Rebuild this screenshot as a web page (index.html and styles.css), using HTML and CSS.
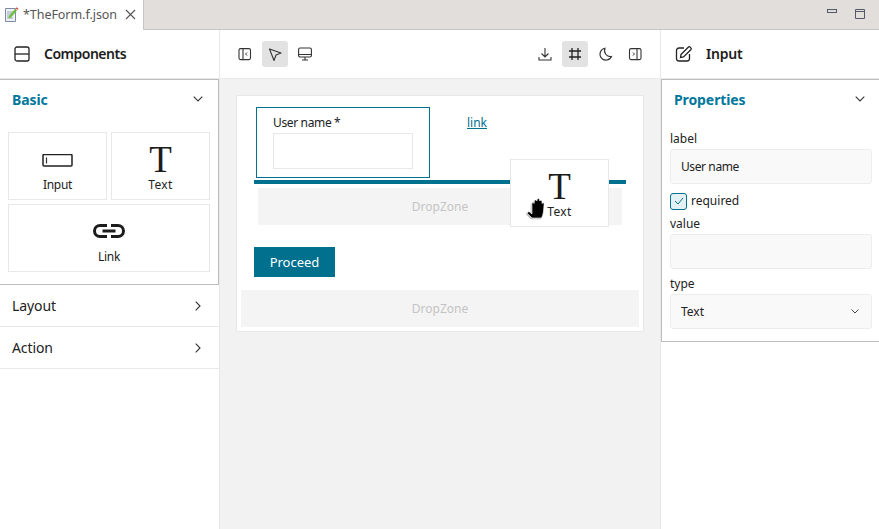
FILE: index.html
```html
<!DOCTYPE html>
<html lang="en">
<head>
<meta charset="utf-8">
<title>TheForm</title>
<link rel="stylesheet" href="styles.css">
</head>
<body>
<div class="app">
  <div class="tabbar">
    <div class="tab">
      <svg class="tab-icon" width="14" height="15" viewBox="0 0 14 15"><path d="M.5 1.500h10v13H.5z" fill="#eef1f6" stroke="#7c8aa5"/><path d="M2 5h6M2 7h5M2 9h4M2 11h6" stroke="#9aa6bb"/><path d="M4 9l6-7 2 1.600-6 7-2.500.8z" fill="#6fbf3f"/><path d="M10.500 1.500l1-1.300 2 1.600-1 1.300z" fill="#d9503f"/></svg>
      <span class="tab-title">*TheForm.f.json</span>
      <svg class="tab-close" width="11" height="11" viewBox="0 0 11 11"><path d="M1 1l9 9M10 1l-9 9" stroke="#555" stroke-width="1.100" fill="none"/></svg>
    </div>
    <div class="winctl">
      <svg width="10" height="4" viewBox="0 0 10 4"><rect x=".5" y=".5" width="9" height="3" fill="none" stroke="#555a66"/></svg>
      <svg width="10" height="10" viewBox="0 0 10 10"><path d="M.5.500h9v9h-9zM.5 2.500h9" fill="none" stroke="#555a66"/></svg>
    </div>
  </div>
  <div class="main">
    <aside class="left">
      <header class="head">
        <svg class="head-icon" width="16" height="16" viewBox="0 0 16 16"><rect x="1" y="1" width="14" height="14" rx="2" fill="none" stroke="#222" stroke-width="1.300"/><path d="M1 8h14" stroke="#222" stroke-width="1.300"/></svg>
        <span class="head-title">Components</span>
      </header>
      <section class="panel-open">
        <div class="acc-head accent">Basic
          <svg class="chev" width="10" height="6" viewBox="0 0 10 6"><path d="M.7.700L5 5 9.300.7" fill="none" stroke="#333" stroke-width="1.100"/></svg>
        </div>
        <div class="palette">
          <div class="pal-item">
            <svg class="pal-icon" width="32" height="14" viewBox="0 0 32 14"><rect x="1" y=".5" width="29" height="11.500" rx="1" fill="none" stroke="#222" stroke-width="1.500"/><path d="M4.500 3.500v6" stroke="#333" stroke-width="1.200"/></svg>
            <span>Input</span>
          </div>
          <div class="pal-item">
            <span class="big-t">T</span>
            <span class="t-lbl">Text</span>
          </div>
          <div class="pal-item wide">
            <svg class="pal-icon link-icon" width="32" height="16" viewBox="0 0 32 16"><path d="M14 2.500H7a5.500 5.500 0 0 0 0 11h7M18 2.500h7a5.500 5.500 0 0 1 0 11h-7" fill="none" stroke="#1c1c1c" stroke-width="3"/><path d="M9.500 8h13" stroke="#1c1c1c" stroke-width="3"/></svg>
            <span>Link</span>
          </div>
        </div>
      </section>
      <div class="acc-row">Layout
        <svg width="6" height="10" viewBox="0 0 6 10"><path d="M.7.700L5 5 .7 9.300" fill="none" stroke="#333" stroke-width="1.100"/></svg>
      </div>
      <div class="acc-row">Action
        <svg width="6" height="10" viewBox="0 0 6 10"><path d="M.7.700L5 5 .7 9.300" fill="none" stroke="#333" stroke-width="1.100"/></svg>
      </div>
    </aside>
    <main class="center">
      <div class="toolbar">
        <div class="tools">
          <button class="tool"><svg width="14" height="14" viewBox="0 0 14 14"><rect x="1" y="1.600" width="11.500" height="11" rx="1.500" fill="none" stroke="#333" stroke-width="1.100"/><path d="M5 1.600v11" stroke="#333" stroke-width="1.100"/><path d="M9 5.500L7.500 7 9 8.500" fill="none" stroke="#333"/></svg></button>
          <button class="tool on"><svg width="15" height="15" viewBox="0 0 15 15"><path d="M1.500 2l11.500 4-5 2-2 5.500z" fill="none" stroke="#333" stroke-width="1.100" stroke-linejoin="round"/></svg></button>
          <button class="tool"><svg width="14" height="14" viewBox="0 0 14 14"><rect x=".6" y="1" width="12.800" height="9" rx="1.500" fill="none" stroke="#333" stroke-width="1.100"/><path d="M.6 7.500h12.800M7 10v3M4 13h6" fill="none" stroke="#333" stroke-width="1.100"/></svg></button>
        </div>
        <div class="tools">
          <button class="tool"><svg width="14" height="15" viewBox="0 0 14 15"><path d="M7 1v9M3.500 6.500L7 10l3.500-3.500M1 10v3h12v-3" fill="none" stroke="#333" stroke-width="1.100"/></svg></button>
          <button class="tool on"><svg width="14" height="14" viewBox="0 0 14 14"><path d="M4 1v12M10 1v12M1 4h12M1 10h12" fill="none" stroke="#222" stroke-width="1.300"/></svg></button>
          <button class="tool"><svg width="15" height="15" viewBox="0 0 15 15"><path d="M7 1.200a6 6 0 1 0 6.500 8.300A6 6 0 0 1 7 1.200z" fill="none" stroke="#333" stroke-width="1.100"/></svg></button>
          <button class="tool"><svg width="14" height="14" viewBox="0 0 14 14"><rect x="1.500" y="1.600" width="11.500" height="11" rx="1.500" fill="none" stroke="#333" stroke-width="1.100"/><path d="M9 1.600v11" stroke="#333" stroke-width="1.100"/><path d="M5 5.500L6.500 7 5 8.500" fill="none" stroke="#333"/></svg></button>
        </div>
      </div>
      <div class="stage">
        <div class="canvas">
          <div class="row-top">
            <div class="selected">
              <div class="field-label">User name *</div>
              <div class="field-input"></div>
            </div>
            <a class="link" href="#">link</a>
          </div>
          <div class="drop-bar"></div>
          <div class="dropzone inner">DropZone</div>
          <button class="proceed">Proceed</button>
          <div class="dropzone outer">DropZone</div>
          <div class="ghost">
            <span class="big-t">T</span>
            <span class="t-lbl">Text</span>
            <svg class="hand" width="22" height="22" viewBox="0 0 22 22"><path d="M5 21l-5-5 2-1.500 3 2.500L5 6.500c0-1.500 2-1.500 2 0L7.500 4c0-1.500 2.200-1.500 2.300 0l.5-1.500c.3-1.300 2.200-1.200 2.200.2l.3 1.300c.4-1.200 2.100-1 2.100.4l.2 2.100c.5-1 2-.8 2 .5L16.500 14c-.3 3-1 5-2 7z" fill="#000" stroke="#fff" stroke-width=".6"/></svg>
          </div>
        </div>
      </div>
    </main>
    <aside class="right">
      <header class="head">
        <svg class="head-icon" width="18" height="18" viewBox="0 0 18 18"><path d="M9 3H4a2.500 2.500 0 0 0-2.500 2.500v8A2.500 2.500 0 0 0 4 16h8a2.500 2.500 0 0 0 2.500-2.500V9" fill="none" stroke="#222" stroke-width="1.300"/><path d="M6 9.500l7.500-7.500c1-1 3.500 1.200 2.500 2.500L8.500 12 5.500 12.500z" fill="none" stroke="#222" stroke-width="1.300"/></svg>
        <span class="head-title">Input</span>
      </header>
      <section class="props">
        <div class="acc-head accent props-head">Properties
          <svg class="chev" width="10" height="6" viewBox="0 0 10 6"><path d="M.7.700L5 5 9.300.7" fill="none" stroke="#333" stroke-width="1.100"/></svg>
        </div>
        <div class="form">
          <label class="prop-label">label</label>
          <div class="prop-input">User name</div>
          <div class="check-row">
            <span class="check"><svg width="12" height="10" viewBox="0 0 12 10"><path d="M2 5l3 3 5-6" fill="none" stroke="#00708f" stroke-width="1"/></svg></span>
            <span class="check-text">required</span>
          </div>
          <label class="prop-label">value</label>
          <div class="prop-input"></div>
          <label class="prop-label type-label">type</label>
          <div class="prop-input select">Text
            <svg width="8" height="5" viewBox="0 0 8 5"><path d="M.5.500L4 4 7.500.5" fill="none" stroke="#444"/></svg>
          </div>
        </div>
      </section>
    </aside>
  </div>
</div>
</body>
</html>
```
FILE: styles.css
```css
* { box-sizing: border-box; }
html, body { margin: 0; height: 100%; }
body { font-family: "Noto Sans", "Open Sans", sans-serif; font-size: 13px; color: #222; background: #fff; overflow: hidden; }
.app { display: flex; flex-direction: column; height: 529px; width: 879px; }

.tabbar { height: 30px; flex: none; display: flex; justify-content: space-between; background: #e2dedb; border-bottom: 1px solid #c8c6c4; }
.tab { width: 144px; height: 30px; background: #fff; border-right: 1px solid #c8c6c4; display: flex; align-items: center; padding: 0 7px 2px 5px; }
.tab-icon { flex: none; }
.tab-title { margin-left: 4px; font-size: 12.500px; color: #555; letter-spacing: -.05px; white-space: nowrap; }
.tab-close { margin-left: auto; margin-top: 1px; flex: none; }
.winctl { display: flex; align-items: flex-start; gap: 18px; padding: 9px 14px 0 0; }

.main { flex: 1; display: flex; min-height: 0; }
.left { width: 220px; flex: none; border-right: 1px solid #e8e8e8; }
.right { width: 218px; flex: none; }
.center { flex: 1; min-width: 0; display: flex; flex-direction: column; background: #f2f2f2; border-right: 1px solid #e8e8e8; }

.head { height: 49px; display: flex; align-items: center; padding-left: 14px; border-bottom: 1px solid #e8e8e8; }
.head-title { font-size: 14px; font-weight: 600; margin-left: 14px; margin-bottom: 2px; color: #1c1c1c; letter-spacing: -.5px; }
.right .head-title { margin-left: 13px; letter-spacing: -.2px; }

.panel-open { height: 206px; border: 1px solid #bdbdbd; border-left: 0; }
.acc-head { height: 40px; display: flex; align-items: center; justify-content: space-between; padding: 0 15px 2px 12px; font-size: 14px; font-weight: 700; letter-spacing: -.1px; }
.accent { color: #00779b; }
.palette { display: grid; grid-template-columns: 99px 99px; grid-auto-rows: 68px; gap: 4px; padding: 12px 0 0 8px; }
.pal-item { border: 1px solid #e8e8e8; display: flex; flex-direction: column; align-items: center; justify-content: flex-end; padding-bottom: 6px; font-size: 12px; color: #222; letter-spacing: -.3px; }
.wide { grid-column: 1 / 3; }
.pal-icon { margin-bottom: 8px; }
.link-icon { margin-bottom: 9px; }
.t-lbl { letter-spacing: .4px; }
.big-t { font-family: "Liberation Serif", serif; font-size: 37px; line-height: 28px; color: #1c1c1c; height: 28px; margin-bottom: 2px; letter-spacing: 0; }
.acc-row { height: 42px; display: flex; align-items: center; justify-content: space-between; padding: 0 18px 0 12px; font-size: 14px; color: #222; border-bottom: 1px solid #e8e8e8; letter-spacing: -.1px; }

.toolbar { height: 49px; flex: none; display: flex; justify-content: space-between; align-items: center; background: #fff; border-bottom: 1px solid #e8e8e8; padding: 0 12px; }
.tools { display: flex; gap: 4px; }
.tool { width: 26px; height: 26px; border: 0; padding: 0; border-radius: 3px; background: transparent; display: flex; align-items: center; justify-content: center; }
.tool.on { background: #e2e2e2; }

.stage { flex: 1; padding: 16px 16px 0; }
.canvas { position: relative; width: 408px; height: 237px; background: #fff; border: 1px solid #e8e8e8; padding: 11px 4px 0; }
.row-top { display: flex; padding-left: 15px; }
.selected { width: 174px; height: 71px; border: 1px solid #00708f; padding: 6px 16px 0; }
.field-label { font-size: 12px; line-height: 18px; margin-bottom: 1px; letter-spacing: -.35px; }
.field-input { height: 36px; border: 1px solid #e8e8e8; }
.link { margin: 7px 0 0 37px; font-size: 12px; line-height: 18px; color: #00708f; }
.drop-bar { height: 4px; margin: 2px 13px 0; background: #00708f; }
.dropzone { background: #f4f4f4; color: #c4c4c4; font-size: 12px; display: flex; align-items: center; justify-content: center; }
.inner { height: 37px; margin: 4px 17px 0; }
.proceed { display: block; width: 81px; height: 30px; margin: 22px 0 13px 13px; border: 0; background: #00708f; color: #fff; font: 13px "Noto Sans", sans-serif; }
.outer { height: 37px; }
.ghost { position: absolute; left: 273px; top: 63px; width: 99px; height: 68px; background: #fff; border: 1px solid #e8e8e8; display: flex; flex-direction: column; align-items: center; justify-content: flex-end; padding-bottom: 6px; font-size: 12px; }
.hand { position: absolute; left: 16px; top: 37px; filter: drop-shadow(-1px 1px 0 #bbb); }

.props { height: 263px; border: 1px solid #bdbdbd; border-right: 0; }
.props-head { padding: 0 14px 2px 12px; }
.form { padding: 12px 7px 0 8px; display: flex; flex-direction: column; font-size: 12px; }
.prop-label { line-height: 16px; margin-top: -1px; margin-bottom: 2px; }
.prop-input { height: 35px; background: #f9f9f9; border: 1px solid #ededed; border-radius: 3px; display: flex; align-items: center; padding-left: 10px; letter-spacing: -.4px; }
.check-row { display: flex; align-items: center; gap: 4px; height: 18px; margin: 8px 0 7px; }
.check { width: 17px; height: 17px; border: 1px solid #00708f; border-radius: 3px; background: #e3f0f4; display: flex; align-items: center; justify-content: center; }
.check-text { padding-bottom: 2px; }
.type-label { margin-top: 7px; }
.select { justify-content: space-between; padding-right: 12px; letter-spacing: 0; }
```
